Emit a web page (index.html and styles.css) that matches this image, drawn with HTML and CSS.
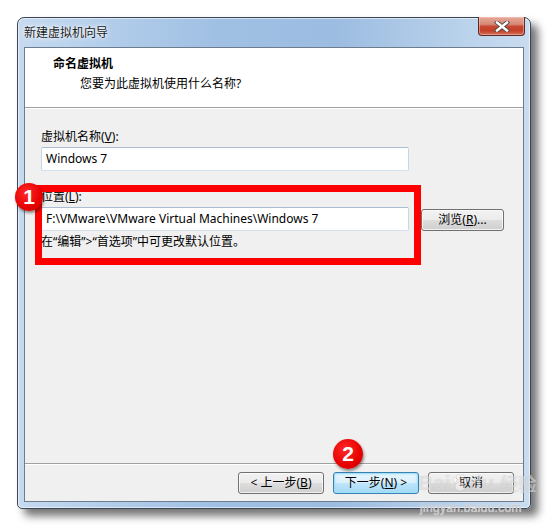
FILE: index.html
```html
<!DOCTYPE html>
<html lang="zh-CN">
<head>
<meta charset="utf-8">
<title>新建虚拟机向导</title>
<link rel="stylesheet" href="styles.css">
</head>
<body>
<div class="stage">
  <div class="window">
    <div class="titlebar">
      <span class="title">新建虚拟机向导</span>
      <div class="close">
        <svg width="16" height="11" viewBox="0 0 16 11">
          <path d="M3 1.5 L13 9.5 M13 1.5 L3 9.5" stroke="#4a4a4a" stroke-width="4.2" stroke-linecap="square"/>
          <path d="M3 1.5 L13 9.5 M13 1.5 L3 9.5" stroke="#ffffff" stroke-width="2.4" stroke-linecap="square"/>
        </svg>
      </div>
    </div>
    <div class="client">
      <div class="header">
        <div class="h-title">命名虚拟机</div>
        <div class="h-sub">您要为此虚拟机使用什么名称?</div>
      </div>
      <div class="form">
        <div class="label">虚拟机名称(<u>V</u>):</div>
        <div class="input">Windows 7</div>
        <div class="label loc">位置(<u>L</u>):</div>
        <div class="row">
          <div class="input">F:\VMware\VMware Virtual Machines\Windows 7</div>
          <div class="btn browse">浏览(<u>R</u>)...</div>
        </div>
        <div class="hint">在“编辑”&gt;“首选项”中可更改默认位置。</div>
        <div class="highlight"></div>
        <div class="badge b1">1</div>
      </div>
      <div class="footer">
        <div class="badge b2">2</div>
        <div class="btn">&lt; 上一步(<u>B</u>)</div>
        <div class="btn default">下一步(<u>N</u>) &gt;</div>
        <div class="btn">取消</div>
      </div>
    </div>
  </div>
  <div class="wm-logo">Bai<svg class="paw" width="16" height="18" viewBox="0 0 16 18"><ellipse cx="8" cy="12.5" rx="5" ry="4.5"/><ellipse cx="3" cy="6" rx="2" ry="2.6"/><ellipse cx="6.5" cy="2.8" rx="2" ry="2.5"/><ellipse cx="10.5" cy="3" rx="2" ry="2.5"/><ellipse cx="13.5" cy="6.5" rx="2" ry="2.5"/></svg>du <span class="wm-cn">经验</span></div>
  <div class="wm-url">jingyan.baidu.com</div>
</div>
</body>
</html>
```
FILE: styles.css
```css
html, body {
  margin: 0;
  padding: 0;
  background: #ffffff;
}
body {
  font-family: "Noto Sans", "Noto Sans CJK SC", sans-serif;
  font-size: 12px;
  color: #000;
}
.stage {
  position: relative;
  width: 547px;
  height: 526px;
  padding: 17px 0 0 17px;
  box-sizing: border-box;
}
.window {
  box-sizing: border-box;
  width: 514px;
  height: 492px;
  border: 1px solid #3b4652;
  border-radius: 7px 7px 5px 5px;
  padding: 0 6px 6px 6px;
  display: flex;
  flex-direction: column;
  background:
    linear-gradient(to bottom, rgba(255,255,255,0) 0, rgba(255,255,255,0) 100%),
    linear-gradient(to right, #c6daf0 0%, #b2cdea 18%, #9fbfe3 40%, #9cbce1 62%, #b4cee9 82%, #c9dcf0 100%);
  box-shadow: inset 0 0 0 1px rgba(255,255,255,0.55), 7px 7px 8px 0 rgba(0,0,0,0.55);
}
.titlebar {
  height: 29px;
  display: flex;
  justify-content: space-between;
  align-items: center;
  flex: none;
}
.title {
  line-height: 16px;
  padding-left: 0;
  color: #1b1b1b;
  text-shadow: 0 0 6px #ffffff, 0 0 3px #ffffff;
}
.close {
  align-self: flex-start;
  margin-top: -1px;
  margin-right: -1px;
  width: 47px;
  height: 19px;
  box-sizing: border-box;
  border: 1px solid #5a2b24;
  border-top: none;
  border-radius: 0 0 4px 4px;
  background: linear-gradient(to bottom, #e6a898 0%, #d88a78 40%, #c64a33 52%, #c43f28 75%, #d5705a 100%);
  box-shadow: inset 0 0 0 1px rgba(255,210,200,0.45);
  display: flex;
  align-items: center;
  justify-content: center;
}
.client {
  flex: 1;
  display: flex;
  flex-direction: column;
  border: 1px solid #6d7d8e;
  background: #f0f0f0;
  position: relative;
}
.header {
  height: 60px;
  box-sizing: border-box;
  background: #ffffff;
  padding: 8px 0 0 28px;
  border-bottom: 1px solid #a0a0a0;
  box-shadow: 0 1px 0 #ffffff;
  flex: none;
}
.h-title {
  font-weight: bold;
  line-height: 16px;
}
.h-sub {
  margin-top: 4px;
  margin-left: 27px;
  line-height: 16px;
}
.form {
  flex: 1;
  position: relative;
  padding: 21px 0 0 16px;
}
.label {
  line-height: 16px;
  margin-bottom: 2px;
}
.label.loc {
  margin-top: 18px;
}
.input {
  box-sizing: border-box;
  width: 368px;
  height: 24px;
  line-height: 22px;
  padding-left: 4px;
  background: #ffffff;
  border: 1px solid;
  border-color: #abbdd0 #c6d7e8 #d3e1ef #c6d7e8;
  border-radius: 2px;
  white-space: nowrap;
}
.row {
  display: flex;
  align-items: center;
  gap: 12px;
}
.hint {
  margin-top: 3px;
  line-height: 16px;
}
.btn {
  box-sizing: border-box;
  width: 86px;
  height: 22px;
  line-height: 20px;
  text-align: center;
  border: 1px solid #707070;
  border-radius: 3px;
  background: linear-gradient(to bottom, #f2f2f2 0%, #ebebeb 50%, #dddddd 51%, #cfcfcf 100%);
  box-shadow: inset 0 0 0 1px rgba(255,255,255,0.7);
  white-space: nowrap;
}
.btn.browse {
  width: 83px;
  margin-top: 1px;
}
.btn.default {
  border-color: #3c7fb1;
  background: linear-gradient(to bottom, #eaf6fd 0%, #d9f0fc 50%, #bee6fd 51%, #a7d9f5 100%);
  box-shadow: inset 0 0 0 1px #9fe2f8, inset 0 0 3px 1px rgba(140,220,250,0.6);
}
.footer {
  flex: none;
  height: 38px;
  box-sizing: border-box;
  border-top: 1px solid #a0a0a0;
  box-shadow: inset 0 1px 0 #ffffff;
  padding: 8px 9px 0 0;
  display: flex;
  justify-content: flex-end;
  gap: 9px;
  position: relative;
}
.highlight {
  position: absolute;
  left: 10px;
  top: 77px;
  width: 386px;
  height: 80px;
  box-sizing: border-box;
  border: 7px solid #ff0000;
}
.badge {
  position: absolute;
  width: 28px;
  height: 28px;
  border-radius: 50%;
  background: radial-gradient(circle at 40% 35%, #ff2a2a 0%, #e60000 60%, #c00000 100%);
  color: #ffffff;
  font-family: "Liberation Sans", Arial, sans-serif;
  font-weight: bold;
  font-size: 21px;
  line-height: 28px;
  text-align: center;
  box-shadow: 1px 2px 3px rgba(0,0,0,0.45);
}
.b1 {
  left: -10px;
  top: 75px;
}
.b2 {
  left: 308px;
  top: -25px;
  width: 30px;
  height: 30px;
  line-height: 30px;
}
.wm-logo {
  position: absolute;
  left: 418px;
  top: 471px;
  font-family: "Liberation Sans", Arial, sans-serif;
  font-weight: bold;
  font-size: 21px;
  line-height: 24px;
  color: rgba(255,255,255,0.45);
  text-shadow: 0 0 1px rgba(120,120,120,0.35);
  display: flex;
  align-items: center;
  white-space: nowrap;
}
.paw {
  fill: rgba(255,255,255,0.45);
  stroke: rgba(120,120,120,0.25);
  stroke-width: 0.6;
  margin: 0 1px;
}
.wm-cn {
  font-family: "Noto Sans CJK SC", sans-serif;
  font-size: 18px;
  margin-left: 6px;
}
.wm-url {
  position: absolute;
  left: 420px;
  top: 501px;
  font-family: "Liberation Sans", Arial, sans-serif;
  font-size: 12px;
  line-height: 14px;
  color: #c4c4c4;
  letter-spacing: 0.3px;
  text-shadow: 0 0 1px #ffffff;
}
```
